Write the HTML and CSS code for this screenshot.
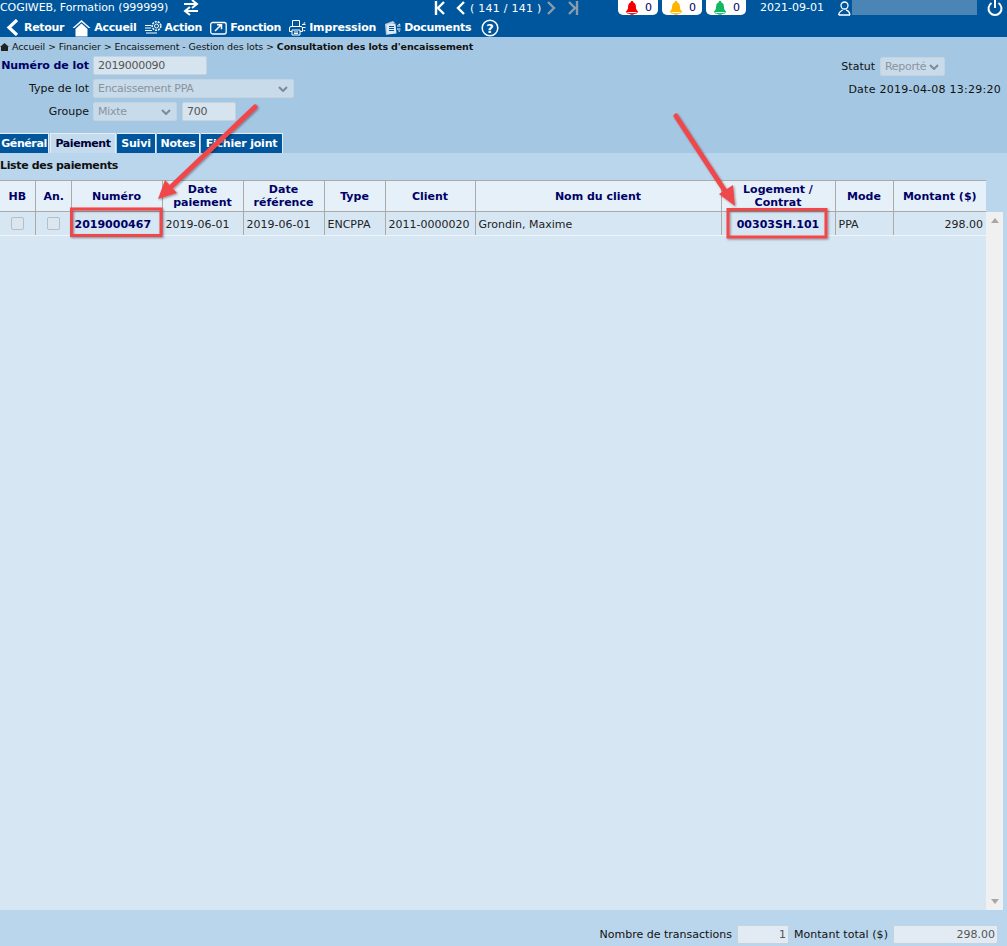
FILE: index.html
```html
<!DOCTYPE html>
<html lang="fr">
<head>
    <meta charset="UTF-8">
    <title>Consultation des lots d'encaissement</title>
    <link rel="stylesheet" href="styles.css">
</head>
<body>
    <div class="page">
        <header class="topbar">
            <div class="toprow">
                <span class="company">COGIWEB, Formation (999999)</span>
                <svg class="swap" width="18" height="16" viewBox="0 0 18 16"><path d="M2 5h12M10 1l5 4-5 4" transform="translate(0 -1)" fill="none" stroke="#fff" stroke-width="2"/><path d="M16 11H4M8 7l-5 4 5 4" fill="none" stroke="#fff" stroke-width="2"/></svg>
                <div class="pager">
                    <svg width="12" height="14" viewBox="0 0 12 14"><path d="M2 0v14M10 1L4 7l6 6" fill="none" stroke="#fff" stroke-width="2.4"/></svg>
                    <svg class="prev" width="10" height="14" viewBox="0 0 10 14"><path d="M8 1L2 7l6 6" fill="none" stroke="#fff" stroke-width="2.4"/></svg>
                    <span class="count">( 141 / 141 )</span>
                    <svg class="next" width="10" height="14" viewBox="0 0 10 14"><path d="M2 1l6 6-6 6" fill="none" stroke="#8a9bab" stroke-width="2.4"/></svg>
                    <svg class="last" width="12" height="14" viewBox="0 0 12 14"><path d="M10 0v14M2 1l6 6-6 6" fill="none" stroke="#8a9bab" stroke-width="2.4"/></svg>
                </div>
                <div class="alerts">
                    <span class="alert"><svg width="14" height="14" viewBox="0 0 14 14"><path d="M7 0c1 0 1.400.6 1.500 1.500 2 .8 2.500 3 2.500 5 0 2 1 3 2.500 4.500H.5C2 9.500 3 8.500 3 6.500c0-2 .5-4.200 2.500-5C5.600.6 6 0 7 0z" fill="#f00000"/><path d="M1.500 11.500c1 1.500 10 1.500 11 0M5.500 12.500a1.500 1.500 0 0 0 3 0" stroke="#f00000" fill="none"/></svg>0</span>
                    <span class="alert"><svg width="14" height="14" viewBox="0 0 14 14"><path d="M7 0c1 0 1.400.6 1.500 1.500 2 .8 2.500 3 2.500 5 0 2 1 3 2.500 4.500H.5C2 9.500 3 8.500 3 6.500c0-2 .5-4.200 2.500-5C5.600.6 6 0 7 0z" fill="#ffb400"/><path d="M1.500 11.500c1 1.500 10 1.500 11 0M5.500 12.500a1.500 1.500 0 0 0 3 0" stroke="#ffb400" fill="none"/></svg>0</span>
                    <span class="alert"><svg width="14" height="14" viewBox="0 0 14 14"><path d="M7 0c1 0 1.400.6 1.500 1.500 2 .8 2.500 3 2.500 5 0 2 1 3 2.500 4.500H.5C2 9.500 3 8.500 3 6.500c0-2 .5-4.200 2.500-5C5.600.6 6 0 7 0z" fill="#10b860"/><path d="M1.500 11.500c1 1.500 10 1.500 11 0M5.500 12.500a1.500 1.500 0 0 0 3 0" stroke="#10b860" fill="none"/></svg>0</span>
                </div>
                <span class="today">2021-09-01</span>
                <svg class="usericon" width="14" height="15" viewBox="0 0 14 15"><circle cx="6.500" cy="4.500" r="3.500" fill="none" stroke="#fff" stroke-width="1.300"/><path d="M.7 14c0-3 2-4 4-5M12 14H.7M8 9c2 .5 3.500 2 4 5" fill="none" stroke="#fff" stroke-width="1.300"/></svg>
                <span class="username"></span>
                <svg class="power" width="16" height="16" viewBox="0 0 16 16"><path d="M8 0v8" stroke="#fff" stroke-width="2" fill="none"/><path d="M4.500 3A6.500 6.500 0 1 0 11.500 3" stroke="#fff" stroke-width="2" fill="none"/></svg>
            </div>
            <nav class="menu">
                <a class="menuitem"><svg width="14" height="17" viewBox="0 0 14 17"><path d="M11 1L3 8.500 11 16" fill="none" stroke="#fff" stroke-width="3.200"/></svg><span class="backlabel">Retour</span></a>
                <a class="menuitem"><svg width="19" height="18" viewBox="0 0 19 18"><path d="M.5 9L9.500 1l9 8h-2L9.500 3l-7 6z" fill="#fff"/><path d="M3.500 10l6-5.500 6 5.500v7.500h-12z" fill="#fff"/></svg>Accueil</a>
                <a class="menuitem"><svg width="17" height="15" viewBox="0 0 17 15"><path d="M0 5.500h6M0 8h6M0 10.500h7M1 13h11" stroke="#fff" fill="none"/><circle cx="11.500" cy="6" r="4.300" fill="none" stroke="#fff" stroke-width="1.600" stroke-dasharray="2 1"/><circle cx="11.500" cy="6" r="2" fill="none" stroke="#fff"/></svg>Action</a>
                <a class="menuitem"><svg width="17" height="14" viewBox="0 0 17 14"><rect x=".7" y="1.500" width="15.500" height="11.500" rx="2" fill="none" stroke="#fff" stroke-width="1.300"/><path d="M5 10l6-6M7 3.700h4.500v4.500" fill="none" stroke="#fff" stroke-width="1.500"/></svg>Fonction</a>
                <a class="menuitem wide"><svg width="17" height="16" viewBox="0 0 17 16"><path d="M3.500 6V.5h7V6" fill="#00569c" stroke="#fff"/><path d="M2 6.500h10a1.500 1.500 0 0 1 1.500 1.500v3.500H.5V8A1.500 1.500 0 0 1 2 6.500z" fill="none" stroke="#fff"/><path d="M3 10h8v5H3z" fill="#00569c" stroke="#fff"/><path d="M5 12h4M5 13.500h4" stroke="#fff"/><path d="M13 4.500h3.500M13 7.500h3.500" stroke="#fff" stroke-width="1.200"/><path d="M14 3.500l1.500-1.500 1 1.500zM14 10l1.500 1.500 1-1.500z" fill="#fff"/></svg>Impression</a>
                <a class="menuitem"><svg width="17" height="16" viewBox="0 0 17 16"><path d="M1 4l8-3 2 2-7 3 1 8-3 1z" fill="#b9cfe2"/><path d="M3 4h9v10H3z" fill="#dfe9f2" transform="rotate(-6 7 9)"/><path d="M5 6.500h5M5 8.500h5M5 10.500h5" stroke="#00569c"/><path d="M13 6h3.500M13 9h3.500" stroke="#fff" stroke-width="1.200"/><path d="M14 5l1.300-1.500 1.200 1.500zM14 10.500l1.300 1.500 1.200-1.500z" fill="#fff"/></svg>Documents</a>
                <svg class="help" width="18" height="18" viewBox="0 0 18 18"><circle cx="9" cy="9" r="7.800" fill="none" stroke="#fff" stroke-width="1.500"/><text x="9" y="13.500" class="helpmark">?</text></svg>
            </nav>
        </header>

        <section class="head">
            <div class="crumbs">
                <svg width="9" height="8" viewBox="0 0 9 8"><path d="M0 4l4.500-4L9 4H8v4H1V4z" fill="#222"/></svg>
                <span class="crumbtext">Accueil &gt; Financier &gt; Encaissement - Gestion des lots &gt; <b>Consultation des lots d'encaissement</b></span>
            </div>
            <div class="formarea">
                <div class="fields">
                    <div class="field">
                        <label class="lbl strong">Numéro de lot</label>
                        <span class="box w114">2019000090</span>
                    </div>
                    <div class="field">
                        <label class="lbl">Type de lot</label>
                        <span class="box w201 off">Encaissement PPA<svg class="chev" width="10" height="6" viewBox="0 0 10 6"><path d="M1 1l4 4 4-4" fill="none" stroke="#7d8b97" stroke-width="2"/></svg></span>
                    </div>
                    <div class="field">
                        <label class="lbl">Groupe</label>
                        <span class="box w84 off">Mixte<svg class="chev" width="10" height="6" viewBox="0 0 10 6"><path d="M1 1l4 4 4-4" fill="none" stroke="#7d8b97" stroke-width="2"/></svg></span>
                        <span class="box w54">700</span>
                    </div>
                </div>
                <div class="status">
                    <div class="statusrow">
                        <label>Statut</label>
                        <span class="box w65 off">Reporté<svg class="chev" width="10" height="6" viewBox="0 0 10 6"><path d="M1 1l4 4 4-4" fill="none" stroke="#7d8b97" stroke-width="2"/></svg></span>
                    </div>
                    <div class="dateline">Date 2019-04-08 13:29:20</div>
                </div>
            </div>
            <div class="tabs">
                <span class="tab t1">Général</span>
                <span class="tab t2 active">Paiement</span>
                <span class="tab t3">Suivi</span>
                <span class="tab t4">Notes</span>
                <span class="tab t5">Fichier joint</span>
            </div>
        </section>

        <main class="content">
            <h2 class="listtitle">Liste des paiements</h2>
            <table class="grid">
                <colgroup>
                    <col class="c35"><col class="c36"><col class="c91"><col class="c81"><col class="c81"><col class="c61"><col class="c90"><col class="c246"><col class="c114"><col class="c58"><col class="c93">
                </colgroup>
                <thead>
                    <tr>
                        <th>HB</th><th>An.</th><th>Numéro</th><th>Date paiement</th><th>Date référence</th><th>Type</th><th>Client</th><th>Nom du client</th><th>Logement / Contrat</th><th>Mode</th><th>Montant ($)</th>
                    </tr>
                </thead>
            </table>
            <div class="listbody">
                <div class="rows">
                    <table class="grid">
                        <colgroup>
                            <col class="c35"><col class="c36"><col class="c91"><col class="c81"><col class="c81"><col class="c61"><col class="c90"><col class="c246"><col class="c114"><col class="c58"><col class="c93">
                        </colgroup>
                        <tbody>
                            <tr>
                                <td class="mid chk"><span class="check"></span></td>
                                <td class="mid chk"><span class="check"></span></td>
                                <td class="link">2019000467</td>
                                <td>2019-06-01</td>
                                <td>2019-06-01</td>
                                <td>ENCPPA</td>
                                <td>2011-0000020</td>
                                <td>Grondin, Maxime</td>
                                <td class="link mid">00303SH.101</td>
                                <td>PPA</td>
                                <td class="num">298.00</td>
                            </tr>
                        </tbody>
                    </table>
                </div>
                <div class="scrollbar">
                    <span class="arrow up"></span>
                    <span class="arrow down"></span>
                </div>
            </div>
        </main>

        <footer class="totals">
            <label>Nombre de transactions</label>
            <span class="box total w52r">1</span>
            <label class="totallabel">Montant total ($)</label>
            <span class="box total w105r">298.00</span>
        </footer>

        <svg class="marks" width="1007" height="946" viewBox="0 0 1007 946">
            <defs>
                <filter id="shade" x="-10%" y="-10%" width="120%" height="120%"><feDropShadow dx="1" dy="1" stdDeviation="1.200" flood-color="#000" flood-opacity=".4"/></filter>
            </defs>
            <g filter="url(#shade)">
                <rect x="71.500" y="209" width="89.500" height="26.500" fill="none" stroke="#f0464c" stroke-width="3"/>
                <rect x="728" y="209.500" width="98" height="27.500" fill="none" stroke="#f0464c" stroke-width="3"/>
                <path d="M255 107L172 186" fill="none" stroke="#f0464c" stroke-width="5" stroke-linecap="round"/>
                <path d="M158 199l7-19 12 13z" fill="#f0464c"/>
                <path d="M676 116l49 75" fill="none" stroke="#f0464c" stroke-width="5" stroke-linecap="round"/>
                <path d="M735 206l-16-12 14-9z" fill="#f0464c"/>
            </g>
        </svg>
    </div>
</body>
</html>
```

FILE: styles.css
```css
* {
    box-sizing: border-box;
}
html, body {
    margin: 0;
    padding: 0;
}
body {
    font-family: "DejaVu Sans", Verdana, sans-serif;
    font-size: 11px;
    color: #111;
}
.page {
    position: relative;
    width: 1007px;
    height: 946px;
    display: flex;
    flex-direction: column;
    overflow: hidden;
}

/* top bar */
.topbar {
    height: 37px;
    background-color: #00569c;
    color: #fff;
}
.toprow {
    height: 18px;
    display: flex;
    align-items: center;
    position: relative;
}
.company {
    width: 182px;
    line-height: 14px;
    margin-top: -3px;
    letter-spacing: -0.07px;
    white-space: nowrap;
}
.swap {
    margin-top: -2px;
}
.pager {
    display: flex;
    align-items: center;
    margin-left: 234px;
    width: 185px;
    margin-top: -2px;
}
.pager .prev {
    margin-left: 10px;
}
.pager .count {
    margin-left: 4px;
    letter-spacing: 0.25px;
    white-space: nowrap;
}
.pager .next {
    margin-left: 4px;
}
.pager .last {
    margin-left: 11px;
}
.alerts {
    display: flex;
    gap: 4px;
    margin-top: -3px;
    margin-left: -1px;
}
.alert {
    width: 40px;
    height: 15px;
    background-color: #fff;
    color: #000066;
    border-radius: 0 0 5px 5px;
    display: flex;
    align-items: center;
    padding-left: 7px;
    gap: 6px;
    line-height: 15px;
}
.today {
    margin-left: 14px;
    margin-top: -3px;
    width: 78px;
    white-space: nowrap;
}
.usericon {
    margin-top: -2px;
}
.username {
    width: 125px;
    height: 15px;
    margin-top: -3px;
    background-color: #4a85b5;
}
.power {
    margin-left: 10px;
    margin-top: -2px;
}
.menu {
    height: 19px;
    display: flex;
    align-items: center;
    padding-left: 6px;
}
.menuitem {
    display: flex;
    align-items: center;
    font-weight: bold;
    letter-spacing: -0.3px;
    white-space: nowrap;
    margin-right: 8px;
    gap: 3px;
}
.menuitem.wide {
    letter-spacing: -0.15px;
}
.backlabel {
    margin-left: 1px;
}
.help {
    margin-left: 2px;
}
.helpmark {
    fill: #fff;
    font-size: 13px;
    font-weight: bold;
    text-anchor: middle;
}

/* header area */
.head {
    height: 116px;
    background-color: #a4c8e3;
    display: flex;
    flex-direction: column;
}
.crumbs {
    height: 19px;
    display: flex;
    align-items: center;
    gap: 3px;
    font-size: 9.5px;
    letter-spacing: -0.11px;
    white-space: nowrap;
}
.formarea {
    display: flex;
    justify-content: space-between;
    height: 77px;
}
.fields {
    display: flex;
    flex-direction: column;
    gap: 4px;
}
.field {
    display: flex;
    align-items: center;
    height: 19px;
    gap: 4px;
}
.lbl {
    width: 89px;
    text-align: right;
    white-space: nowrap;
}
.strong {
    font-weight: bold;
    color: #000066;
    letter-spacing: -0.05px;
}
.box {
    display: flex;
    align-items: center;
    height: 19px;
    padding-left: 4px;
    background-color: #d6e4ef;
    border: 1px solid #c5d3de;
    border-radius: 2px;
    color: #555;
    letter-spacing: -0.3px;
    position: relative;
    white-space: nowrap;
}
.off {
    color: #8a949d;
    background-color: #c8dbea;
}
.chev {
    position: absolute;
    right: 5px;
    top: 6px;
}
.w114 {
    width: 114px;
}
.w201 {
    width: 201px;
}
.w84 {
    width: 84px;
}
.w54 {
    width: 54px;
    margin-left: 1px;
}
.w65 {
    width: 65px;
}
.status {
    width: 166px;
    padding-right: 6px;
}
.statusrow {
    display: flex;
    align-items: center;
    justify-content: flex-end;
    gap: 5px;
    padding-right: 56px;
    margin-top: 1px;
}
.dateline {
    margin-top: 4px;
    text-align: right;
    line-height: 19px;
    letter-spacing: 0.25px;
    white-space: nowrap;
}
.tabs {
    display: flex;
    gap: 1px;
    height: 20px;
}
.tab {
    display: flex;
    align-items: center;
    justify-content: center;
    font-weight: bold;
    letter-spacing: -0.2px;
    color: #fff;
    background-color: #00569c;
    border-top: 1px solid #e6eef5;
    border-right: 1px solid #e6eef5;
    white-space: nowrap;
}
.tab.active {
    background-color: #c4dbee;
    color: #000033;
    border-left: 1px solid #e6eef5;
}
.t1 {
    width: 49px;
    letter-spacing: -0.4px;
}
.t2 {
    width: 66px;
    letter-spacing: -0.4px;
}
.t3 {
    width: 39px;
}
.t4 {
    width: 43px;
}
.t5 {
    width: 82px;
}

/* list */
.content {
    flex: 1;
    background-color: #bad6ec;
    display: flex;
    flex-direction: column;
    min-height: 0;
}
.listtitle {
    margin: 0;
    height: 27px;
    line-height: 25px;
    font-size: 11px;
    font-weight: bold;
    letter-spacing: -0.35px;
}
.grid {
    width: 986px;
    table-layout: fixed;
    border-collapse: collapse;
}
.c35 {
    width: 35px;
}
.c36 {
    width: 36px;
}
.c91 {
    width: 91px;
}
.c81 {
    width: 81px;
}
.c61 {
    width: 61px;
}
.c90 {
    width: 90px;
}
.c246 {
    width: 246px;
}
.c114 {
    width: 114px;
}
.c58 {
    width: 58px;
}
.c93 {
    width: 93px;
}
.grid th {
    height: 31px;
    background-color: #e6f0f8;
    color: #000066;
    font-weight: bold;
    line-height: 13px;
    padding: 0 8px;
    border-top: 1px solid #aaa;
    border-bottom: 1px solid #aaa;
    border-right: 1px solid #aaa;
    text-align: center;
}
.grid th:last-child {
    border-right: none;
}
.listbody {
    flex: 1;
    width: 1003px;
    display: flex;
    background-color: #d6e6f3;
    min-height: 0;
}
.rows {
    width: 986px;
}
.grid td {
    height: 23px;
    padding: 2px 3px 0;
    border-right: 1px solid #aaa;
    border-bottom: 1px solid #eef4f9;
    white-space: nowrap;
    color: #222;
}
.grid td.chk {
    padding-top: 0;
}
.grid td:last-child {
    border-right: none;
}
.grid .mid {
    text-align: center;
}
.grid .link {
    font-weight: bold;
    color: #000066;
}
.grid .num {
    text-align: right;
}
.check {
    display: inline-block;
    width: 13px;
    height: 13px;
    vertical-align: middle;
    background-color: #dbe6ef;
    border: 1px solid #b4bfc9;
    border-radius: 2px;
}
.scrollbar {
    width: 17px;
    background-color: #f0f0f0;
    display: flex;
    flex-direction: column;
    justify-content: space-between;
    align-items: center;
    padding: 6px 0 6px;
}
.arrow {
    width: 0;
    height: 0;
    border-left: 4px solid transparent;
    border-right: 4px solid transparent;
}
.up {
    border-bottom: 5px solid #a8a8a8;
}
.down {
    border-top: 5px solid #a8a8a8;
}

/* totals */
.totals {
    height: 36px;
    background-color: #bad6ec;
    display: flex;
    align-items: center;
    justify-content: flex-end;
    gap: 5px;
    padding: 12px 9px 0 0;
}
.totallabel {
    letter-spacing: 0.05px;
}
.total {
    justify-content: flex-end;
    padding: 0 2px 0 0;
    background-color: #e2ebf3;
    letter-spacing: 0;
}
.w52r {
    width: 52px;
}
.w105r {
    width: 105px;
}

/* annotations drawn on the screenshot */
.marks {
    position: absolute;
    left: 0;
    top: 0;
    pointer-events: none;
}
```
